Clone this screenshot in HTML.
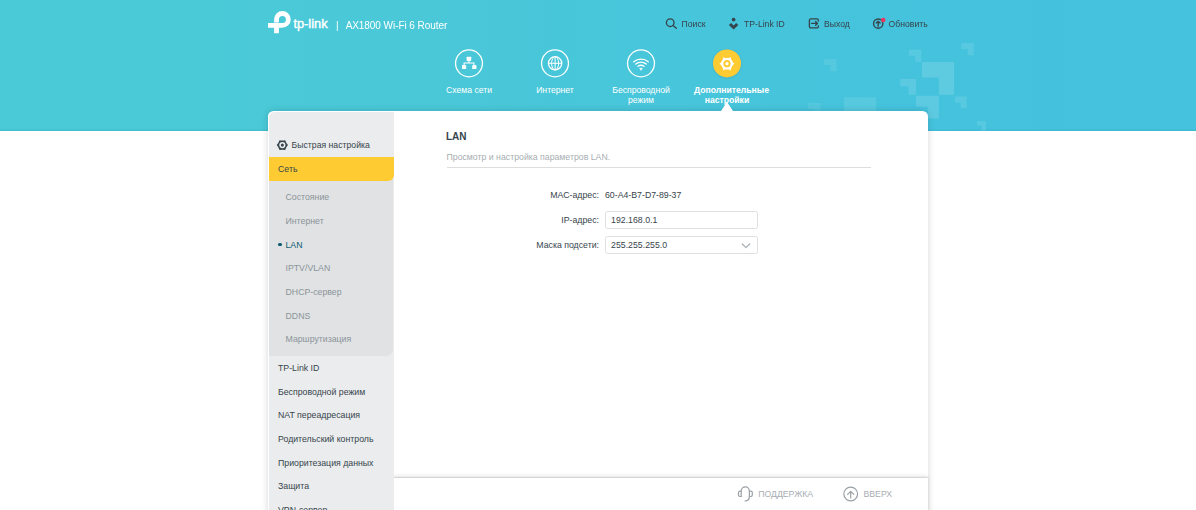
<!DOCTYPE html>
<html lang="ru">
<head>
<meta charset="utf-8">
<title>AX1800 Wi-Fi 6 Router</title>
<style>
*{box-sizing:border-box;margin:0;padding:0}
html,body{width:1196px;height:510px;overflow:hidden;background:#fff;font-family:"Liberation Sans",sans-serif;font-size:12px;color:#36444b}
#hdr{position:absolute;left:0;top:0;width:1196px;height:130.6px;box-shadow:inset 0 -1.5px 0 rgba(0,70,80,.07);background:linear-gradient(90deg,#4acad6 0%,#4ac8d8 35%,#45c3dd 75%,#44c2de 100%);overflow:hidden}
#deco{position:absolute;left:0;top:0}
#logo{position:absolute;left:268.2px;top:11.2px}
#brand{position:absolute;left:293.4px;top:16.1px;font-size:12.8px;color:#fff;line-height:16px;letter-spacing:0;white-space:nowrap;-webkit-text-stroke:.4px #fff}
#model{position:absolute;left:336px;top:18px;will-change:transform;transform:translateY(.5px);font-size:10px;letter-spacing:-.06px;color:#fff;white-space:nowrap;line-height:14px}
#model .sep{margin-right:7.1px}
.tool{position:absolute;top:17px;height:14px;line-height:14px;font-size:8.65px;color:#36444b;white-space:nowrap}
.nav{position:absolute;top:47.4px;width:66px;white-space:nowrap;text-align:center;color:#fff;font-size:8.65px;line-height:10px}
.nav svg{display:block;margin:0 auto 5.7px}
.nav.sel{font-weight:bold}
#tools{position:absolute;left:0;top:0}
#tri{position:absolute;left:720.8px;top:101.8px;width:0;height:0;border-left:6.4px solid transparent;border-right:6.4px solid transparent;border-bottom:9.4px solid #fff;z-index:5}
#panel{position:absolute;left:268px;top:111px;width:660px;height:420px;background:#fff;border-radius:5.5px 5.5px 0 0;box-shadow:0 0 7px rgba(0,0,0,.16)}
#side{position:absolute;left:.5px;top:.5px;width:125.2px;height:420px;background:#ebecee;border-radius:5.5px 0 0 0;overflow:hidden;z-index:3}
.m1{position:absolute;left:10px;font-size:8.76px;color:#36444b;white-space:nowrap;line-height:12px}
.m2{position:absolute;left:17.5px;font-size:8.76px;color:#8b9499;white-space:nowrap;line-height:12px}
#sel{position:absolute;left:0;top:46px;width:125.7px;height:24px;background:#ffcb33;border-radius:0 0 6px 0;z-index:2}
#sub{position:absolute;left:0;top:46px;width:125.3px;height:199px;background:#e0e2e4;border-radius:0 0 7px 0}
#foot{position:absolute;left:125px;top:366.7px;width:535px;height:60px;background:#fff;box-shadow:0 -1px 1px rgba(0,0,0,.09),0 -2px 4px rgba(0,0,0,.10)}
.fb{position:absolute;top:10.5px;font-size:8.7px;color:#a7aeb2;line-height:12px;white-space:nowrap}
h1{position:absolute;left:178px;top:19.6px;font-size:10px;font-weight:bold;color:#36444b;line-height:12px}
#desc{position:absolute;left:178.5px;top:40px;font-size:8.74px;color:#a7aeb2;line-height:12px;white-space:nowrap}
#hr{position:absolute;left:178.5px;top:55.5px;width:424px;height:1px;background:#dcdee0}
.lbl{position:absolute;right:329px;font-size:8.76px;color:#36444b;line-height:12px;white-space:nowrap}
.val{position:absolute;left:337px;font-size:8.76px;color:#36444b;line-height:12px;white-space:nowrap}
.inp{position:absolute;left:337px;width:153px;height:17.6px;border:1px solid #dde0e2;border-radius:2.5px;font-size:8.76px;color:#36444b;line-height:16.6px;padding-left:5.1px;background:#fff}
</style>
</head>
<body>
<div id="hdr">
  <svg id="deco" width="1196" height="131" viewBox="0 0 1196 131"><path d="M824.1 59.1H836.5V71.3H830.5V65.1H824.1Z" fill="#fff" fill-opacity="0.09"/><path d="M908.8 49.7H921.2V61.9H915.2V55.7H908.8Z" fill="#fff" fill-opacity="0.1"/><path d="M961.2 43.0H973.7V55.2H967.7V49.0H961.2Z" fill="#fff" fill-opacity="0.1"/><path d="M922.0 62.1H954.1V94.8H938.8000000000001V77.4H922.0Z" fill="#fff" fill-opacity="0.14"/><path d="M900.4 79.1H916.0V94.8H908.5V86.6H900.4Z" fill="#fff" fill-opacity="0.12"/><path d="M916.0 95.8H938.8V118.4H927.8V106.8H916.0Z" fill="#fff" fill-opacity="0.13"/><path d="M954.9 96.4H966.7V108.2H960.7V102.4H954.9Z" fill="#fff" fill-opacity="0.1"/><path d="M977.0 120.9H985.9V131H981.4V125.4H977.0Z" fill="#fff" fill-opacity="0.1"/><path d="M844.1 97.2H876.0V131H860.7V112.5H844.1Z" fill="#fff" fill-opacity="0.1"/><path d="M807.8 103.0H820.6V116H814.6V109.0H807.8Z" fill="#fff" fill-opacity="0.08"/></svg>
  <svg id="logo" width="24" height="24" viewBox="0 0 24 24"><g fill="#fff"><path d="M6.1 8.4A8.3 8.3 0 1 1 14.4 16.7H10.9V11.9H14.4A3.5 3.5 0 1 0 10.9 8.4V11.4H6.1Z"/><path d="M0 12H10.9V22.3H6.1V16.8H0Z"/></g></svg><div id="brand">tp-link</div>
  <div id="model"><span class="sep">|</span>AX1800 Wi-Fi 6 Router</div>

  <svg id="tools" width="1196" height="40" viewBox="0 0 1196 40"><g fill="none" stroke="#36444b" stroke-width="1.35" stroke-linecap="round" stroke-linejoin="round">
<circle cx="670.2" cy="22.7" r="3.8"/><path d="M673.1 25.6L676.3 28.3"/>
<path d="M816.3 18.9H810.9A1.5 1.5 0 0 0 809.4 20.4V26.4A1.5 1.5 0 0 0 810.9 27.9H816.9A1.5 1.5 0 0 0 818.4 26.4V25.8M818.4 21V20.4A1.5 1.5 0 0 0 816.9 18.9H816"/>
<path d="M811.6 23.4H817.2M815.6 21.5L817.5 23.4L815.6 25.3"/>
<circle cx="878.2" cy="23.6" r="4.65"/><path d="M878.2 26.3V21.3M876.3 23.1L878.2 21.2L880.1 23.1"/>
</g>
<circle cx="733.6" cy="19.6" r="1.85" fill="#36444b"/>
<path d="M728.9 25L731.1 22.9L733.6 25.4L736.1 22.9L738.3 25L733.6 29.6Z" fill="#36444b"/>
<circle cx="883.2" cy="20" r="2.3" fill="#e8375e"/>
</svg>
  <div class="tool" style="left:681.6px">Поиск</div>
  <div class="tool" style="left:744px">TP-Link ID</div>
  <div class="tool" style="left:824px">Выход</div>
  <div class="tool" style="left:888.6px">Обновить</div>

  <div class="nav" style="left:436px"><svg width="32" height="32" viewBox="0 -.35 32 32"><circle cx="16" cy="16" r="13.45" fill="none" stroke="#fff" stroke-width="1.3"/><g fill="#fff"><rect x="13.6" y="9.4" width="4.6" height="4.2" rx=".6"/><rect x="9" y="17.7" width="4.2" height="4" rx=".6"/><rect x="19.2" y="17.7" width="4.2" height="4" rx=".6"/></g><path d="M15.9 13.5V15.6M11.1 17.8V15.6H20.9V17.8" fill="none" stroke="#fff" stroke-width="1.05"/></svg>Схема сети</div>
  <div class="nav" style="left:522px"><svg width="32" height="32" viewBox="0 -.35 32 32"><circle cx="16" cy="16" r="13.45" fill="none" stroke="#fff" stroke-width="1.3"/><g fill="none" stroke="#fff"><circle cx="16.1" cy="15.95" r="6.65" stroke-width="1.3"/><ellipse cx="16.1" cy="15.95" rx="3.5" ry="6.65" stroke-width="1"/><path d="M9.5 15.95H22.7M16.1 9.3V22.6" stroke-width="1"/></g></svg>Интернет</div>
  <div class="nav" style="left:608px"><svg width="32" height="32" viewBox="0 -.35 32 32"><circle cx="16" cy="16" r="13.45" fill="none" stroke="#fff" stroke-width="1.3"/><path d="M8.72 14.36A11.45 11.45 0 0 1 23.28 14.36M10.80 16.67A8.35 8.35 0 0 1 21.20 16.67M13.02 18.94A5.2 5.2 0 0 1 18.98 18.94" fill="none" stroke="#fff" stroke-width="1.4" stroke-linecap="round"/><path d="M14.6 20.9H17.4L16 23.1Z" fill="#fff" stroke="#fff" stroke-width=".5" stroke-linejoin="round"/></svg>Беспроводной<br>режим</div>
  <div class="nav sel" style="left:694px"><svg width="32" height="32" viewBox="0 -.35 32 32" style="overflow:visible"><circle cx="16" cy="16.6" r="14" fill="#000" fill-opacity=".13" filter="url(#bl)"/><defs><filter id="bl" x="-30%" y="-30%" width="160%" height="160%"><feGaussianBlur stdDeviation="1"/></filter></defs><circle cx="16" cy="16.05" r="14" fill="#ffcb33"/><path d="M23.50 16.30Q19.98 18.60 19.75 22.80Q16.00 20.90 12.25 22.80Q12.02 18.60 8.50 16.30Q12.02 14.00 12.25 9.80Q16.00 11.70 19.75 9.80Q19.98 14.00 23.50 16.30Z" fill="#fff"/><circle cx="16" cy="16.3" r="5.75" fill="#fff"/><circle cx="16" cy="16.3" r="2.6" fill="none" stroke="#ffcb33" stroke-width="2"/></svg>Дополнительные<br>настройки</div>
  <div id="tri"></div>
</div>

<div id="panel">
  <div id="side"><div style="position:absolute;left:-.5px;top:-.5px;width:126px;height:420px">
    <div id="sub"></div>
    <div id="sel"></div>
    <svg style="position:absolute;left:7px;top:27px" width="14" height="14" viewBox="-.35 -.1 14 14"><path d="M12.60 7.00Q10.72 9.15 9.80 11.85Q7.00 11.30 4.20 11.85Q3.28 9.15 1.40 7.00Q3.28 4.85 4.20 2.15Q7.00 2.70 9.80 2.15Q10.72 4.85 12.60 7.00Z" fill="#36444b"/><circle cx="7" cy="7" r="3.1" fill="#ebecee"/><circle cx="7" cy="7" r="1.55" fill="#36444b"/></svg>
    <div class="m1" style="left:23.6px;top:28px;font-size:8.68px">Быстрая настройка</div>
    <div class="m1" style="top:52px;z-index:3">Сеть</div>
    <div class="m2" style="top:80.3px">Состояние</div>
    <div class="m2" style="top:104px">Интернет</div>
    <div style="position:absolute;left:10.4px;top:131.7px;width:3.8px;height:3.8px;border-radius:50%;background:#0b5a6f"></div>
    <div class="m2" style="top:127.6px;color:#0b5a6f">LAN</div>
    <div class="m2" style="top:151.3px">IPTV/VLAN</div>
    <div class="m2" style="top:175px">DHCP-сервер</div>
    <div class="m2" style="top:198.6px">DDNS</div>
    <div class="m2" style="top:222.3px">Маршрутизация</div>
    <div class="m1" style="top:250.9px">TP-Link ID</div>
    <div class="m1" style="top:274.6px">Беспроводной режим</div>
    <div class="m1" style="top:298.3px">NAT переадресация</div>
    <div class="m1" style="top:322.1px">Родительский контроль</div>
    <div class="m1" style="top:345.8px">Приоритезация данных</div>
    <div class="m1" style="top:369.4px">Защита</div>
    <div class="m1" style="top:392.6px">VPN-сервер</div>
  </div></div>
  <h1>LAN</h1>
  <div id="desc">Просмотр и настройка параметров LAN.</div>
  <div id="hr"></div>
  <div class="lbl" style="top:78px">MAC-адрес:</div><div class="val" style="top:78px">60-A4-B7-D7-89-37</div>
  <div class="lbl" style="top:103px">IP-адрес:</div><div class="inp" style="top:100.3px">192.168.0.1</div>
  <div class="lbl" style="top:128px">Маска подсети:</div><div class="inp" style="top:125.2px">255.255.255.0<svg style="position:absolute;right:5.6px;top:5.6px" width="10" height="6" viewBox="0 0 10 6"><path d="M1.3 1L5 4.7L8.7 1" fill="none" stroke="#a7aeb3" stroke-width="1.2" stroke-linecap="round" stroke-linejoin="round"/></svg></div>
  <div id="foot">
    <svg style="position:absolute;left:0;top:-.8px" width="535" height="40" viewBox="0 0 535 40"><g fill="none" stroke="#9aa1a6" stroke-width="1.2" stroke-linecap="round" stroke-linejoin="round"><path d="M348.20 19.50V14.30A4.1 4.35 0 0 1 356.40 14.30V19.50Q356.40 23.70 352.00 24.00" /><path d="M348.20 14.10H346.90A1.4 1.4 0 0 0 345.50 15.50V18.10A1.4 1.4 0 0 0 346.90 19.50H348.20"/><path d="M356.40 14.10H357.90A1.4 1.4 0 0 1 359.30 15.50V18.10A1.4 1.4 0 0 1 357.90 19.50H356.40"/><circle cx="457.70" cy="17.00" r="6.85"/><path d="M457.70 21.00V14.30M454.60 17.40L457.70 14.30L460.80 17.40"/></g></svg>
    <div class="fb" style="left:365.2px">ПОДДЕРЖКА</div>
    <div class="fb" style="left:470.5px">ВВЕРХ</div>
  </div>
</div>
</body>
</html>
